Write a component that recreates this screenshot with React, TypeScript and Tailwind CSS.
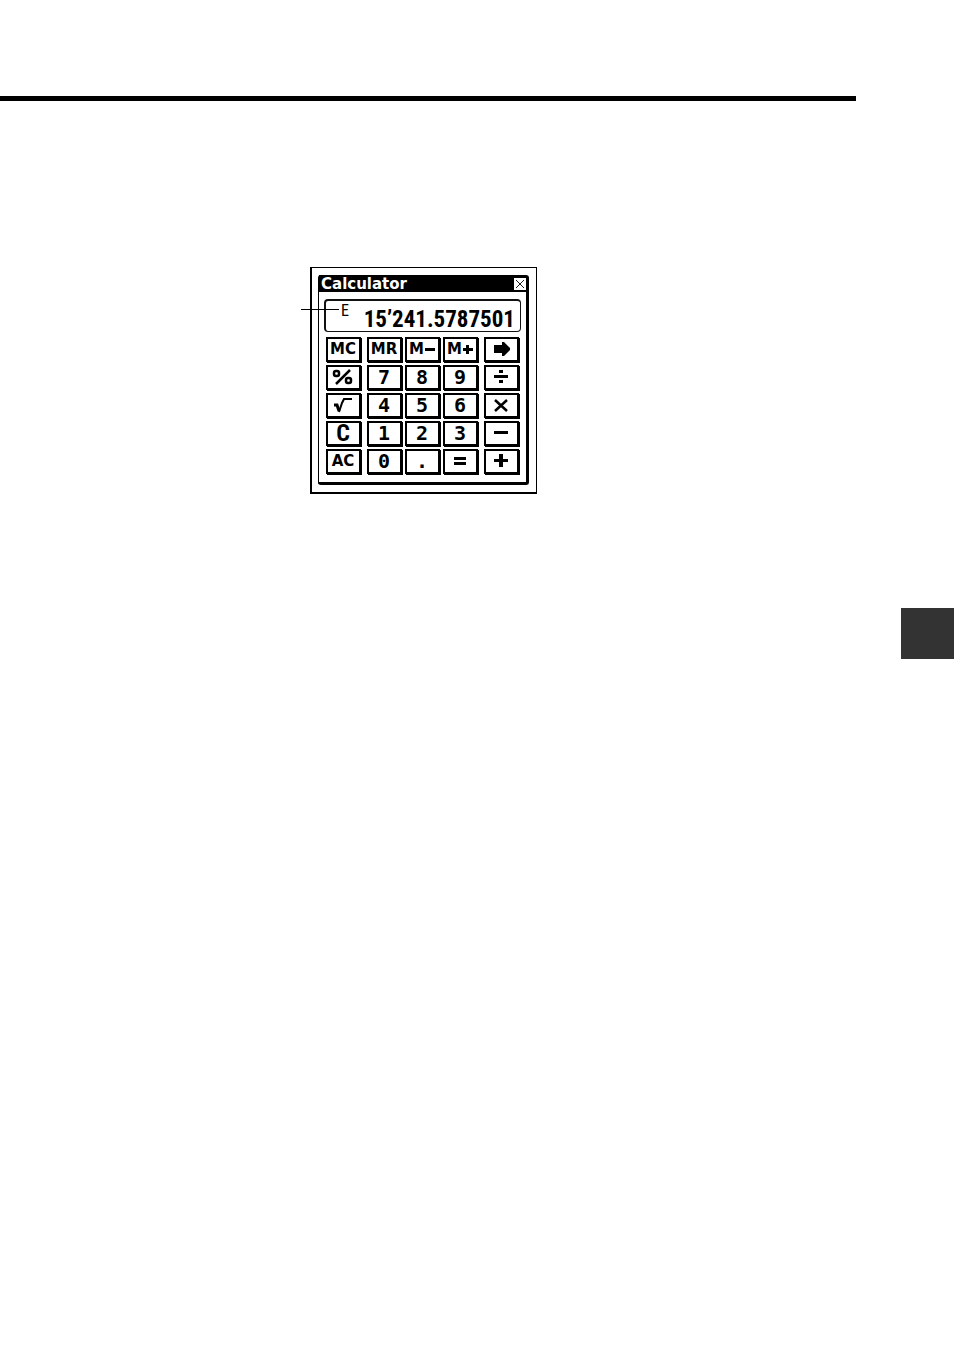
/**
 * Calculator Page
 *
 * Manual page showing the calculator window with its display and keypad.
 */

import type { ReactNode } from "react";

interface Key {
  id: string;
  label: string;
  face: ReactNode;
  className?: string;
}

interface GlyphProps {
  d: string;
}

// Filled 20x20 key symbol, drawn on whole pixels
function Glyph({ d }: GlyphProps) {
  return (
    <svg width="20" height="20" viewBox="0 0 20 20" fill="currentColor" aria-hidden="true">
      <path d={d} />
    </svg>
  );
}

const WORD = "text-[15px]";
const DIGIT = "font-['DejaVu_Sans_Mono',monospace] text-xl";

const digit = (n: string): Key => ({ id: n, label: n, face: n, className: DIGIT });

const KEYS: Key[] = [
  { id: "mc", label: "Memory clear", face: "MC", className: WORD },
  { id: "mr", label: "Memory recall", face: "MR", className: WORD },
  {
    id: "m-",
    label: "Memory subtract",
    face: (
      <>
        M
        <svg width="11" height="12" viewBox="0 0 11 12" aria-hidden="true">
          <path d="M1 5h10v3H1z" />
        </svg>
      </>
    ),
    className: WORD,
  },
  {
    id: "m+",
    label: "Memory add",
    face: (
      <>
        M
        <svg width="11" height="12" viewBox="0 0 11 12" aria-hidden="true">
          <path d="M1 5h3V2h3v3h4v3H7v3H4V8H1z" />
        </svg>
      </>
    ),
    className: WORD,
  },
  { id: "paste", label: "Paste result", face: <Glyph d="M3 6h8V3h2l6 6v2l-6 6h-2v-3H3z" /> },
  {
    id: "percent",
    label: "Percent",
    face: (
      <svg width="22" height="20" viewBox="0 0 22 20" fill="none" stroke="currentColor" strokeWidth="2.5" aria-hidden="true">
        <path d="M18 3 4 17" />
        <rect x="2" y="4" width="5" height="5" rx="2" />
        <rect x="14" y="11" width="5" height="5" rx="2" />
      </svg>
    ),
  },
  digit("7"),
  digit("8"),
  digit("9"),
  { id: "divide", label: "Divide", face: <Glyph d="M3 8h14v3H3zM8 3h4v3H8zM8 13h4v3H8z" /> },
  {
    id: "sqrt",
    label: "Square root",
    face: (
      <svg width="20" height="20" viewBox="0 0 20 20" fill="none" stroke="currentColor" aria-hidden="true">
        <path d="M1 10h3l2 6" strokeWidth="3" />
        <path d="M6 17 9 8l2-4h8" strokeWidth="2" />
      </svg>
    ),
  },
  digit("4"),
  digit("5"),
  digit("6"),
  {
    id: "multiply",
    label: "Multiply",
    face: (
      <svg width="20" height="20" viewBox="0 0 20 20" stroke="currentColor" strokeWidth="2.5" aria-hidden="true">
        <path d="M4 5l12 11M16 5L4 16" />
      </svg>
    ),
  },
  {
    id: "c",
    label: "Clear",
    face: "C",
    className: "font-['Roboto_Condensed',Roboto,sans-serif] text-2xl",
  },
  digit("1"),
  digit("2"),
  digit("3"),
  { id: "minus", label: "Subtract", face: <Glyph d="M3 8h14v3H3z" /> },
  { id: "ac", label: "All clear", face: "AC", className: WORD },
  digit("0"),
  digit("."),
  { id: "equals", label: "Equals", face: <Glyph d="M4 6h12v3H4zM4 11h12v3H4z" /> },
  { id: "plus", label: "Add", face: <Glyph d="M3 8h5V3h4v5h5v3h-5v5H8v-5H3z" /> },
];

function TitleBar() {
  return (
    <div className="flex h-[17px] items-center justify-between bg-black pl-0.5">
      <h1 className="text-[15px] leading-4 font-bold text-white">Calculator</h1>
      <button aria-label="Close" className="flex size-3 items-center justify-center bg-white">
        <svg width="10" height="10" viewBox="0 0 10 10" stroke="#222" strokeWidth="1" aria-hidden="true">
          <path d="M1 1l8 8M9 1L1 9" />
        </svg>
      </button>
    </div>
  );
}

function Display() {
  return (
    <div className="mx-[5px] mt-[7px] flex h-[33px] justify-between rounded-sm border-2 border-r border-b border-[#111] pr-[5px] pl-[15px] font-['Roboto_Condensed',Roboto,sans-serif]">
      <span className="text-base leading-5">E</span>
      <output className="pt-1 text-[23px] leading-[30px] font-bold">15&rsquo;241.5787501</output>
    </div>
  );
}

function Keypad() {
  return (
    <div className="mt-[5px] mb-[7px] ml-[7px] grid auto-rows-[26px] grid-cols-[39px_36px_36px_39px_36px] gap-[2px]">
      {KEYS.map((key) => (
        <button
          key={key.id}
          aria-label={key.label}
          className={`flex h-[25px] w-[35px] items-center justify-center border-2 border-black bg-white pr-px pb-px leading-5 font-bold shadow-[1px_1px_0_#000] ${key.className ?? ""}`}
        >
          {key.face}
        </button>
      ))}
    </div>
  );
}

export default function App() {
  return (
    <main className="flex min-h-screen flex-col bg-white pt-24 font-['DejaVu_Sans',sans-serif] text-black">
      <hr className="mr-[98px] h-[5px] border-0 bg-black" />

      <figure className="relative mt-[166px] ml-[310px] w-fit border border-l-2 border-b-2 border-black px-[6px] py-[7px]">
        <div className="mr-px w-[211px] rounded-[3px] border-l border-r-3 border-b-3 border-black">
          <TitleBar />
          <Display />
          <Keypad />
        </div>
        {/* Callout line pointing at the E indicator */}
        <span className="absolute top-[41px] -left-[11px] h-px w-[38px] bg-black" />
      </figure>

      <aside className="mt-[114px] h-[51px] w-[53px] self-end bg-[#333]" />
    </main>
  );
}
